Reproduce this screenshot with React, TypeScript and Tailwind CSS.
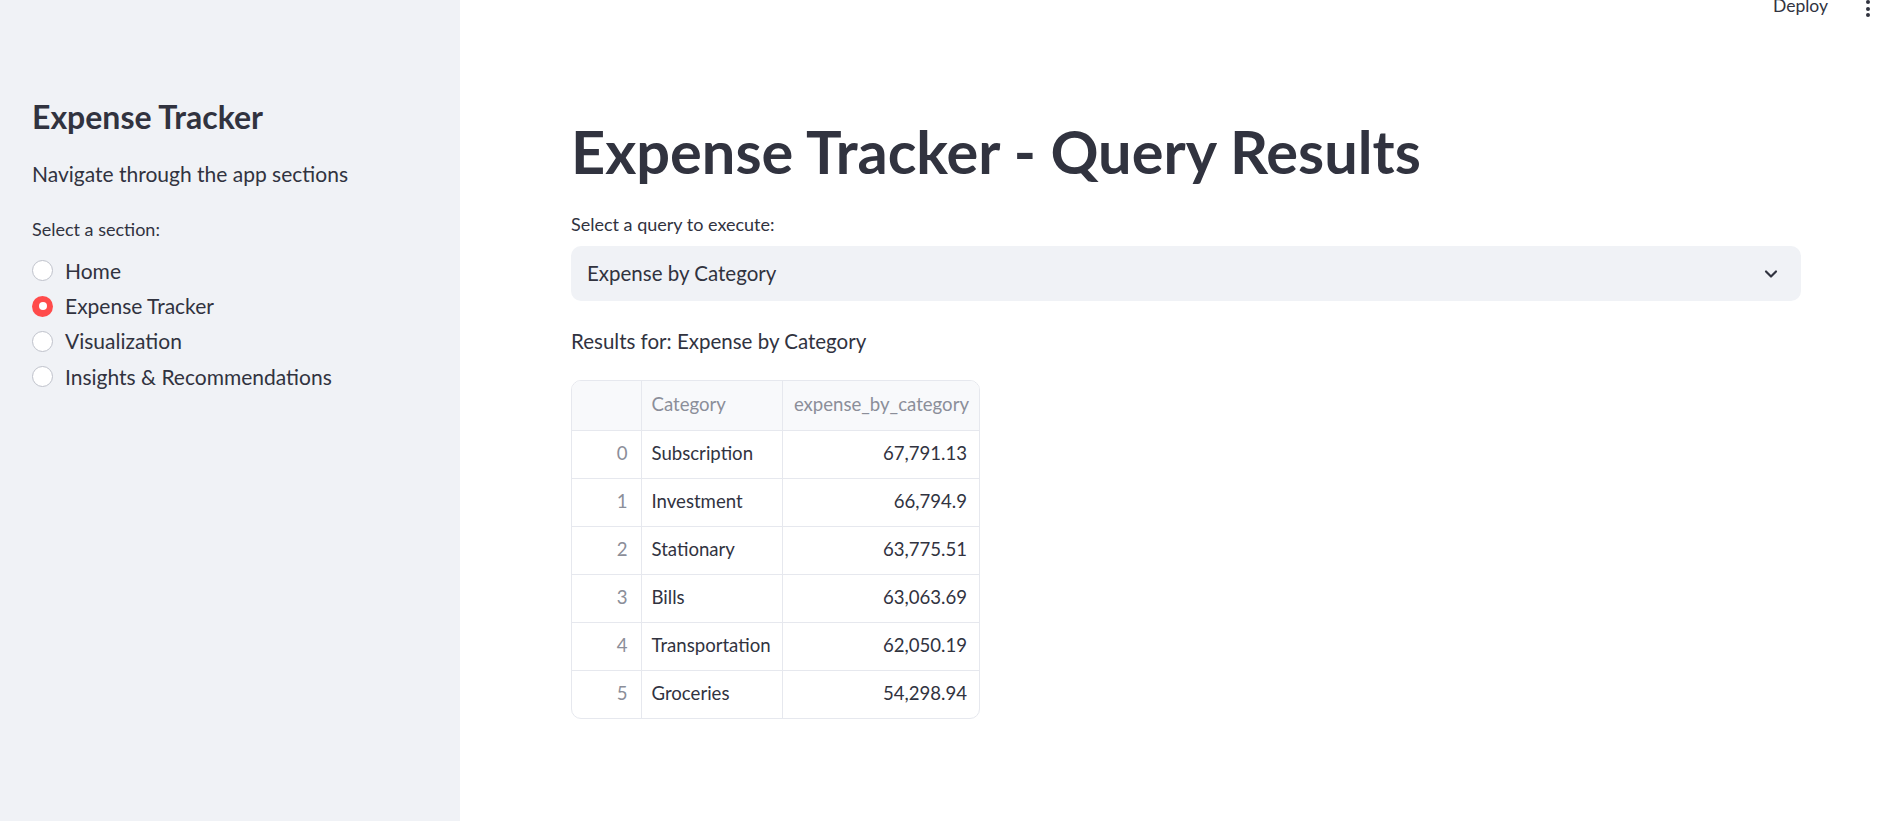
import { ChevronDown } from 'lucide-react'

const sections = ['Home', 'Expense Tracker', 'Visualization', 'Insights & Recommendations']

const rows = [
  { category: 'Subscription', value: '67,791.13' },
  { category: 'Investment', value: '66,794.9' },
  { category: 'Stationary', value: '63,775.51' },
  { category: 'Bills', value: '63,063.69' },
  { category: 'Transportation', value: '62,050.19' },
  { category: 'Groceries', value: '54,298.94' },
]

export default function App() {
  return (
    <div className="flex h-screen w-full overflow-hidden bg-white text-[#31333f] font-['Lato','Noto_Sans',sans-serif]">
      {/* Sidebar */}
      <aside className="w-[460px] shrink-0 bg-[#f0f2f6] pl-[32px] pt-[98px]">
        <h2 className="text-[32px] leading-[38px] font-bold">Expense Tracker</h2>
        <p className="mt-[24px] text-[21px] leading-[28px]">Navigate through the app sections</p>
        <div className="mt-[29px] text-[18px] leading-[24px]">Select a section:</div>
        <div className="mt-[12px] flex flex-col">
          {sections.map((s) => {
            const active = s === 'Expense Tracker'
            return (
              <div key={s} className="flex h-[35.4px] items-center gap-[12px]">
                {active ? (
                  <span className="flex h-[21px] w-[21px] items-center justify-center rounded-full bg-[#ff4b4b]">
                    <span className="h-[8px] w-[8px] rounded-full bg-white" />
                  </span>
                ) : (
                  <span className="h-[21px] w-[21px] rounded-full border border-[#bfc2cb] bg-white" />
                )}
                <span className="text-[21px] leading-[28px]">{s}</span>
              </div>
            )
          })}
        </div>
      </aside>

      {/* Main */}
      <main className="relative flex-1">
        <div className="absolute right-[20px] top-0 flex items-start gap-[38px]">
          <span className="text-[17.5px] leading-[12px]">Deploy</span>
          <span className="flex flex-col gap-[2.5px]">
            <span className="h-[4px] w-[4px] rounded-full bg-[#31333f]" />
            <span className="h-[4px] w-[4px] rounded-full bg-[#31333f]" />
            <span className="h-[4px] w-[4px] rounded-full bg-[#31333f]" />
          </span>
        </div>

        <div className="ml-[111px] w-[1230px] pt-[117px]">
          <h1 className="text-[59.5px] leading-[68px] font-bold">Expense Tracker - Query Results</h1>

          <div className="mt-[27px] text-[18px] leading-[24px]">Select a query to execute:</div>
          <div className="mt-[10px] flex h-[55px] items-center justify-between rounded-[10px] bg-[#f0f2f6] pl-[16px] pr-[20px]">
            <span className="text-[20.5px]">Expense by Category</span>
            <ChevronDown className="h-[20px] w-[20px]" strokeWidth={2.6} />
          </div>

          <div className="mt-[26px] text-[20.5px] leading-[28px]">Results for: Expense by Category</div>

          <div className="mt-[25px] w-[409px] overflow-hidden rounded-[10px] border border-[#e6e8ee]">
            <table className="w-full border-collapse text-[18.6px]">
              <thead>
                <tr className="h-[49px] bg-[#f8f9fb] text-[#8b8e99]">
                  <th className="w-[69px] border-b border-r border-[#e6e8ee] font-normal" />
                  <th className="w-[141px] border-b border-r border-[#e6e8ee] pl-[10px] text-left font-normal">Category</th>
                  <th className="border-b border-[#e6e8ee] pr-[10px] text-right font-normal">expense_by_category</th>
                </tr>
              </thead>
              <tbody>
                {rows.map((r, i) => (
                  <tr key={r.category} className="h-[48px]">
                    <td className={`border-r border-[#e6e8ee] pr-[13px] text-right text-[#8b8e99] ${i < rows.length - 1 ? 'border-b' : ''}`}>{i}</td>
                    <td className={`border-r border-[#e6e8ee] pl-[10px] ${i < rows.length - 1 ? 'border-b' : ''}`}>{r.category}</td>
                    <td className={`border-[#e6e8ee] pr-[12px] text-right ${i < rows.length - 1 ? 'border-b' : ''}`}>{r.value}</td>
                  </tr>
                ))}
              </tbody>
            </table>
          </div>
        </div>
      </main>
    </div>
  )
}
